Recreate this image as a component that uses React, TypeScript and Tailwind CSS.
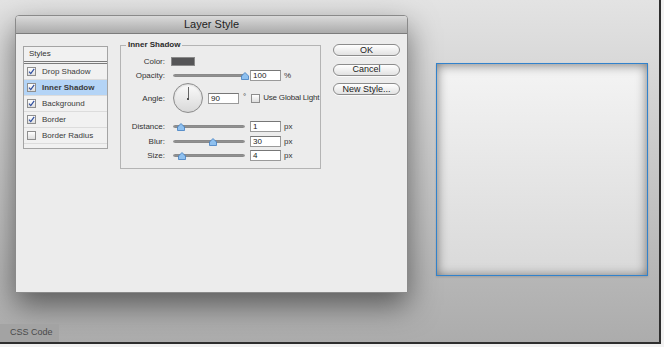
import React from 'react';

// --- Small controls ---

const Check: React.FC<{ on?: boolean }> = ({ on }) => (
  <div className="w-[9px] h-[9px] shrink-0 border border-[#8e8e8e] bg-linear-to-b from-white to-[#dedede] flex items-center justify-center">
    {on && (
      <svg width="7" height="7" viewBox="0 0 7 7">
        <path d="M1 3.6 L2.8 5.6 L6.2 0.8" fill="none" stroke="#2f4fa0" strokeWidth="1.2" />
      </svg>
    )}
  </div>
);

const Field: React.FC<{ value: string }> = ({ value }) => (
  <div className="w-[31px] h-[11px] shrink-0 bg-white border border-[#9a9a9a] border-t-[#777] pl-[2px] text-[8px] leading-[9px] text-[#222]">
    {value}
  </div>
);

const Slider: React.FC<{ pos: number }> = ({ pos }) => (
  <div className="relative w-[72px] h-[11px] ml-[2px] shrink-0 flex items-center">
    <div className="w-full h-[3px] rounded-full bg-linear-to-b from-[#6e6e6e] to-[#b4b4b4] border border-[#8a8a8a]" />
    <svg
      className="absolute top-[2px]"
      style={{ left: pos - 4 }}
      width="8"
      height="8"
      viewBox="0 0 8 8"
    >
      <path d="M4 0.5 L7.5 4 L7.5 7.5 L0.5 7.5 L0.5 4 Z" fill="#8ec0ef" stroke="#3f7cc0" strokeWidth="0.8" />
    </svg>
  </div>
);

const Label: React.FC<{ children: React.ReactNode }> = ({ children }) => (
  <div className="w-[45px] shrink-0 text-right pr-[1px] text-[8px] leading-[11px] text-[#333]">{children}</div>
);

const SliderRow: React.FC<{ label: string; value: string; unit: string; pos: number; mt: string }> = ({ label, value, unit, pos, mt }) => (
  <div className={`flex items-center h-[11px] ${mt}`}>
    <Label>{label}</Label>
    <div className="ml-[5px] flex items-center">
      <Slider pos={pos} />
      <div className="ml-[5px]">
        <Field value={value} />
      </div>
      <span className="ml-[3px] text-[8px] text-[#333]">{unit}</span>
    </div>
  </div>
);

const Btn: React.FC<{ children: React.ReactNode }> = ({ children }) => (
  <div className="w-[67px] h-[12px] rounded-full border border-[#8c8c8c] bg-linear-to-b from-white to-[#e2e2e2] shadow-[0_1px_0_rgba(255,255,255,0.8)] flex items-center justify-center text-[9px] leading-none text-[#222]">
    {children}
  </div>
);

// --- Dialog parts ---

const styleRows = [
  { name: 'Drop Shadow', on: true },
  { name: 'Inner Shadow', on: true, active: true },
  { name: 'Background', on: true },
  { name: 'Border', on: true },
  { name: 'Border Radius', on: false },
];

const StylesList: React.FC = () => (
  <div className="w-[85px] h-[103px] mt-[1px] border border-[#a4a4a4] bg-[#f1f1f1] shrink-0">
    <div className="h-[17px] pl-[5px] flex items-center text-[8px] text-[#333] border-b-[3px] border-double border-[#7a7a7a]">
      Styles
    </div>
    {styleRows.map((r) => (
      <div
        key={r.name}
        className={`h-[16px] flex items-center pl-[3px] border-b border-[#dcdcdc] ${r.active ? 'bg-[#b4d4f6]' : ''}`}
      >
        <Check on={r.on} />
        <span className={`ml-[6px] text-[8px] text-[#3a3a3a] ${r.active ? 'font-bold text-[#1c1c1c]' : ''}`}>{r.name}</span>
      </div>
    ))}
  </div>
);

const InnerShadowGroup: React.FC = () => (
  <fieldset className="w-[201px] min-w-0 h-[129px] -mt-[5px] ml-[12px] border border-[#b4b4b4] pt-[6px] shrink-0">
    <legend className="ml-[5px] px-[2px] text-[8px] leading-[10px] font-bold text-[#2a2a2a]">Inner Shadow</legend>

    <div className="flex items-center h-[11px]">
      <Label>Color:</Label>
      <div className="ml-[5px] w-[24px] h-[9px] bg-[#555557] border border-[#8a8a8a]" />
    </div>

    <SliderRow label="Opacity:" value="100" unit="%" pos={72} mt="mt-[3px]" />

    <div className="flex items-center h-[30px] mt-[2px]">
      <Label>Angle:</Label>
      <div className="ml-[7px] w-[30px] h-[30px] rounded-full border border-[#8c8c8c] bg-linear-to-b from-[#fbfbfb] to-[#d9d9d9] shadow-[inset_0_1px_2px_rgba(0,0,0,0.15)] flex flex-col items-center pt-[3px] shrink-0">
        <div className="w-px h-[11px] bg-[#666]" />
        <div className="w-[2px] h-[2px] bg-[#555]" />
      </div>
      <div className="ml-[5px]">
        <Field value="90" />
      </div>
      <span className="ml-[4px] text-[8px] text-[#333] self-start mt-[8px]">°</span>
      <div className="ml-[5px]">
        <Check />
      </div>
      <span className="ml-[3px] text-[8px] tracking-[-0.2px] text-[#333] whitespace-nowrap">Use Global Light</span>
    </div>

    <SliderRow label="Distance:" value="1" unit="px" pos={8} mt="mt-[8px]" />
    <SliderRow label="Blur:" value="30" unit="px" pos={40} mt="mt-[4px]" />
    <SliderRow label="Size:" value="4" unit="px" pos={9} mt="mt-[3px]" />
  </fieldset>
);

const LayerStyleDialog: React.FC = () => (
  <div className="w-[393px] h-[278px] shrink-0 rounded-t-[4px] border border-[#8a8a8a] bg-[#ececec] shadow-[0_12px_30px_rgba(0,0,0,0.5)] flex flex-col overflow-hidden">
    <div className="h-[18px] shrink-0 bg-linear-to-b from-[#dadada] to-[#ababab] border-b border-[#7c7c7c] flex items-center justify-center text-[11px] text-[#1e1e1e]">
      Layer Style
    </div>
    <div className="flex items-start pl-[7px] pt-[11px]">
      <StylesList />
      <InnerShadowGroup />
      <div className="ml-[12px] flex flex-col gap-[7.5px] -mt-[1px]">
        <Btn>OK</Btn>
        <Btn>Cancel</Btn>
        <Btn>New Style...</Btn>
      </div>
    </div>
  </div>
);

const Preview: React.FC = () => (
  <div className="w-[212px] h-[213px] ml-[28px] mt-[48px] shrink-0 border border-[#3182cc] bg-linear-to-b from-[#f4f4f4] to-[#d9d9d9] shadow-[inset_0_1px_11px_rgba(0,0,0,0.5),0_1px_2px_rgba(0,0,0,0.15)]" />
);

export default function App() {
  return (
    <div className="w-[664px] h-[347px] bg-[#f2f2f2] overflow-hidden" style={{ fontFamily: '"Liberation Sans", Arial, sans-serif' }}>
      <div className="w-[661px] h-[344px] border-r-2 border-b-2 border-[#2e2e2e] bg-linear-to-b from-[#e3e3e3] to-[#acacac] flex flex-col">
        <div className="flex items-start pl-[15px] pt-[15px]">
          <LayerStyleDialog />
          <Preview />
        </div>
        <div className="mt-auto w-[59px] h-[18px] bg-[#a3a3a3] flex items-center pl-[10px] text-[9px] text-[#4a4a4a]">
          CSS Code
        </div>
      </div>
    </div>
  );
}
